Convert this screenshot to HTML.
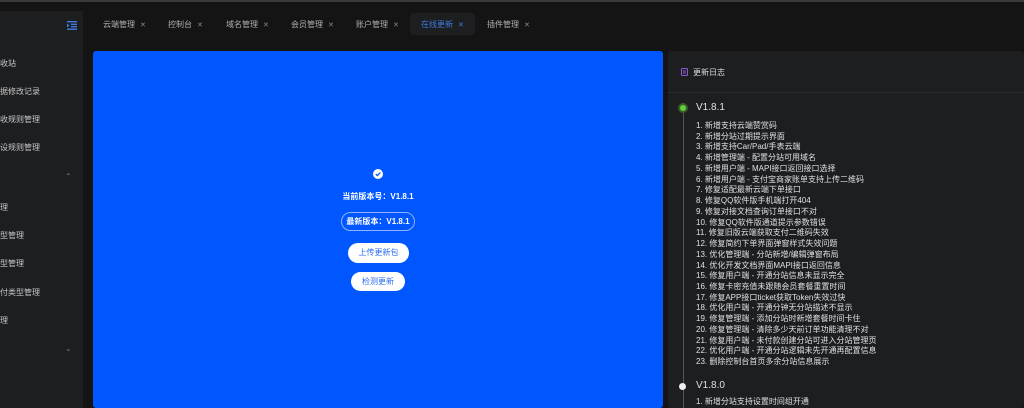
<!DOCTYPE html>
<html><head><meta charset="utf-8"><style>
*{margin:0;padding:0;box-sizing:border-box}
body{width:1024px;height:408px;overflow:hidden;background:#141414;font-family:"Liberation Sans","Noto Sans CJK SC",sans-serif;color:#cfd3dc;position:relative}
.top{position:absolute;left:0;top:0;width:1024px;height:2px;background:#3a3a3a}
.side{position:absolute;left:0;top:11px;width:83px;height:397px;background:#1d1e20}
.si{position:absolute;left:0;font-size:8px;color:#c8c8c8;white-space:nowrap}
.chev{position:absolute;left:65px;font-size:8px;color:#777}
.tab{position:absolute;top:19px;font-size:8px;color:#b0b0b0;white-space:nowrap}
.tab i{font-style:normal;color:#888;margin-left:5px;font-size:7px}
.act{position:absolute;left:410px;top:13px;width:65px;height:22px;background:#1d1e20;border-radius:3px}
.blue{position:absolute;left:93px;top:51px;width:570px;height:357px;background:#0057ff;border-radius:3px}
.card{position:absolute;left:668px;top:51px;width:356px;height:357px;background:#1d1e20;border-radius:3px}
.hd{position:absolute;left:0;top:0;width:356px;height:42px;border-bottom:1px solid #2c2d30}
.li{position:absolute;left:28px;font-size:8px;color:#e0e0e0;white-space:nowrap;line-height:10.73px}
.ctr{position:absolute;left:0;width:570px;text-align:center;color:#fff;font-size:8px;font-weight:bold}
.btn{position:absolute;background:#fff;color:#2a6cf0;border-radius:11px;font-size:8px;text-align:center}
</style></head><body>
<div class="top"></div>
<div class="side">
<svg style="position:absolute;left:67px;top:10px" width="10" height="9" viewBox="0 0 10 9"><rect x="0" y="0" width="10" height="1.4" fill="#3d7be0"/><rect x="4" y="2.6" width="6" height="1.4" fill="#3d7be0"/><rect x="4" y="5" width="6" height="1.4" fill="#3d7be0"/><rect x="0" y="7.5" width="10" height="1.4" fill="#3d7be0"/><path d="M0 2.5L2.5 4.5L0 6.5Z" fill="#3d7be0"/></svg>
</div>
<div class="si" style="top:58px">收站</div>
<div class="si" style="top:86px">据修改记录</div>
<div class="si" style="top:114px">收规则管理</div>
<div class="si" style="top:142px">设规则管理</div>
<div class="chev" style="top:172px">⌃</div>
<div class="si" style="top:202px">理</div>
<div class="si" style="top:230px">型管理</div>
<div class="si" style="top:258px">型管理</div>
<div class="si" style="top:287px">付类型管理</div>
<div class="si" style="top:315px">理</div>
<div class="chev" style="top:344px">⌄</div>
<div class="act"></div>
<div class="tab" style="left:103px">云端管理<i>✕</i></div>
<div class="tab" style="left:168px">控制台<i>✕</i></div>
<div class="tab" style="left:226px">域名管理<i>✕</i></div>
<div class="tab" style="left:291px">会员管理<i>✕</i></div>
<div class="tab" style="left:356px">账户管理<i>✕</i></div>
<div class="tab" style="left:421px;color:#3d7be0">在线更新<i style="color:#3d7be0">✕</i></div>
<div class="tab" style="left:487px">插件管理<i>✕</i></div>
<div class="blue">
<svg style="position:absolute;left:280px;top:118px" width="10" height="10" viewBox="0 0 10 10"><circle cx="5" cy="5" r="5" fill="#fff"/><path d="M2.8 5.1L4.4 6.6L7.3 3.6" stroke="#0057ff" stroke-width="1.3" fill="none"/></svg>
<div class="ctr" style="top:140px">当前版本号：V1.8.1</div>
<div style="position:absolute;left:248px;top:161px;width:74px;height:19px;border:1px solid #8fb2ff;border-radius:10px;color:#fff;font-size:8px;font-weight:bold;text-align:center;line-height:17px">最新版本：V1.8.1</div>
<div class="btn" style="left:255px;top:192px;width:61px;height:20px;line-height:20px">上传更新包</div>
<div class="btn" style="left:258px;top:221px;width:54px;height:19px;line-height:19px">检测更新</div>
</div>
<div class="card">
<div class="hd"><svg style="position:absolute;left:13px;top:17px" width="7" height="8" viewBox="0 0 7 8"><rect x="0.5" y="0.5" width="6" height="7" rx="1" fill="none" stroke="#8e5bd6"/><path d="M2 3h3M2 5h3" stroke="#8e5bd6"/></svg><div style="position:absolute;left:25px;top:16px;font-size:8px;color:#ddd">更新日志</div></div>
<div style="position:absolute;left:14.5px;top:60px;width:1px;height:297px;background:#555"></div>
<div style="position:absolute;left:10px;top:52px;width:10px;height:10px;border-radius:5px;background:#3d5a2a"></div>
<div style="position:absolute;left:12px;top:54px;width:6px;height:6px;border-radius:3px;background:#5fd03a"></div>
<div style="position:absolute;left:28px;top:51px;font-size:10px;color:#e0e0e0">V1.8.1</div>
<div class="li" style="top:70px">1. 新增支持云端赞赏码<br>2. 新增分站过期提示界面<br>3. 新增支持Car/Pad/手表云端<br>4. 新增管理端 - 配置分站可用域名<br>5. 新增用户端 - MAPI接口返回接口选择<br>6. 新增用户端 - 支付宝商家账单支持上传二维码<br>7. 修复适配最新云端下单接口<br>8. 修复QQ软件版手机端打开404<br>9. 修复对接文档查询订单接口不对<br>10. 修复QQ软件版通道提示参数错误<br>11. 修复旧版云端获取支付二维码失效<br>12. 修复简约下单界面弹窗样式失效问题<br>13. 优化管理端 - 分站新增/编辑弹窗布局<br>14. 优化开发文档界面MAPI接口返回信息<br>15. 修复用户端 - 开通分站信息未显示完全<br>16. 修复卡密充值未跟随会员套餐重置时间<br>17. 修复APP接口ticket获取Token失效过快<br>18. 优化用户端 - 开通分钟无分站描述不显示<br>19. 修复管理端 - 添加分站时新增套餐时间卡住<br>20. 修复管理端 - 清除多少天前订单功能清理不对<br>21. 修复用户端 - 未付款创建分站可进入分站管理页<br>22. 优化用户端 - 开通分站逻辑未先开通再配置信息<br>23. 删除控制台首页多余分站信息展示</div>
<div style="position:absolute;left:11px;top:332px;width:7px;height:7px;border-radius:4px;background:#eee"></div>
<div style="position:absolute;left:28px;top:329px;font-size:10px;color:#e0e0e0">V1.8.0</div>
<div class="li" style="top:346px">1. 新增分站支持设置时间组开通</div>
</div>
</body></html>
